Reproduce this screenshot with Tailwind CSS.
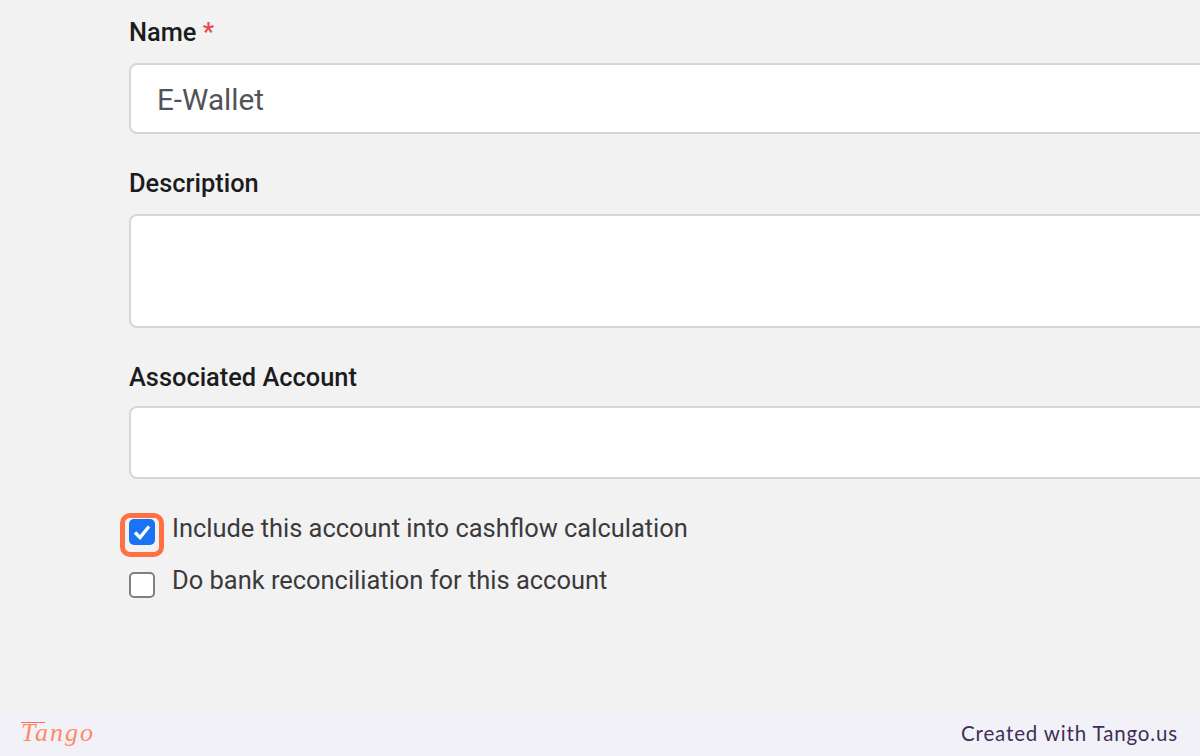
<!DOCTYPE html>
<html>
<head>
<meta charset="utf-8">
<script src="https://cdn.jsdelivr.net/npm/@tailwindcss/browser@4"></script>
</head>
<body class="m-0">
<div class="w-[1200px] h-[756px] overflow-hidden flex flex-col bg-[#f2f2f2] font-['Roboto',sans-serif]">
  <main class="flex-1 pl-[129px] pt-[17px] flex flex-col">
    <label class="h-[30px] leading-[30px] text-[25.4px] font-medium text-[#1c1c1e]">Name <span class="text-[#e5484d]">*</span></label>
    <div class="mt-[16px] w-[1100px] h-[71px] bg-white border-2 border-[#d6d6d6] rounded-[8px] pl-[26px] pt-[4px] flex items-center text-[29.7px] text-[#50545a]">E-Wallet</div>
    <label class="mt-[34px] h-[30px] leading-[30px] text-[25.4px] font-medium text-[#1c1c1e]">Description</label>
    <div class="mt-[16px] w-[1100px] h-[114px] bg-white border-2 border-[#d6d6d6] rounded-[8px]"></div>
    <label class="mt-[34px] h-[30px] leading-[30px] text-[25.4px] font-medium text-[#1c1c1e]">Associated Account</label>
    <div class="mt-[14px] w-[1100px] h-[73px] bg-white border-2 border-[#d6d6d6] rounded-[8px]"></div>
    <div class="mt-[34px] flex items-start gap-[17px] h-[34px]">
      <div class="relative mt-[6px] w-[26px] h-[26px] rounded-[5px] bg-[#1a73f5] flex items-center justify-center">
        <svg width="22" height="22" viewBox="0 0 22 22" fill="none"><path d="M4 11.5 L9 16.5 L18 5.5" stroke="white" stroke-width="3.4"/></svg>
        <div class="absolute -left-[9px] -top-[6px] w-[44px] h-[44px] border-[5px] border-[#ff7143] rounded-[10px]"></div>
      </div>
      <span class="text-[25.45px] leading-[30px] text-[#3a3a3c]">Include this account into cashflow calculation</span>
    </div>
    <div class="mt-[18px] flex items-start gap-[17px] h-[34px]">
      <div class="mt-[7px] w-[26px] h-[26px] rounded-[5px] bg-white border-2 border-[#808080]"></div>
      <span class="text-[25.45px] leading-[30px] text-[#3a3a3c]">Do bank reconciliation for this account</span>
    </div>
  </main>
  <footer class="h-[46px] bg-[#f3f1f8] flex items-center justify-between pl-[21px] pr-[22px]">
    <span class="relative font-['Liberation_Serif',serif] italic text-[26px] leading-[40px] text-[#ff8a68] tracking-[2px]">Tango<span class="absolute left-0 top-[9px] w-[24px] h-px bg-[#ff7143]"></span></span>
    <span class="font-['Lato',sans-serif] text-[20.5px] tracking-[0.85px] text-[#3f2f57]">Created with Tango.us</span>
  </footer>
</div>
</body>
</html>
